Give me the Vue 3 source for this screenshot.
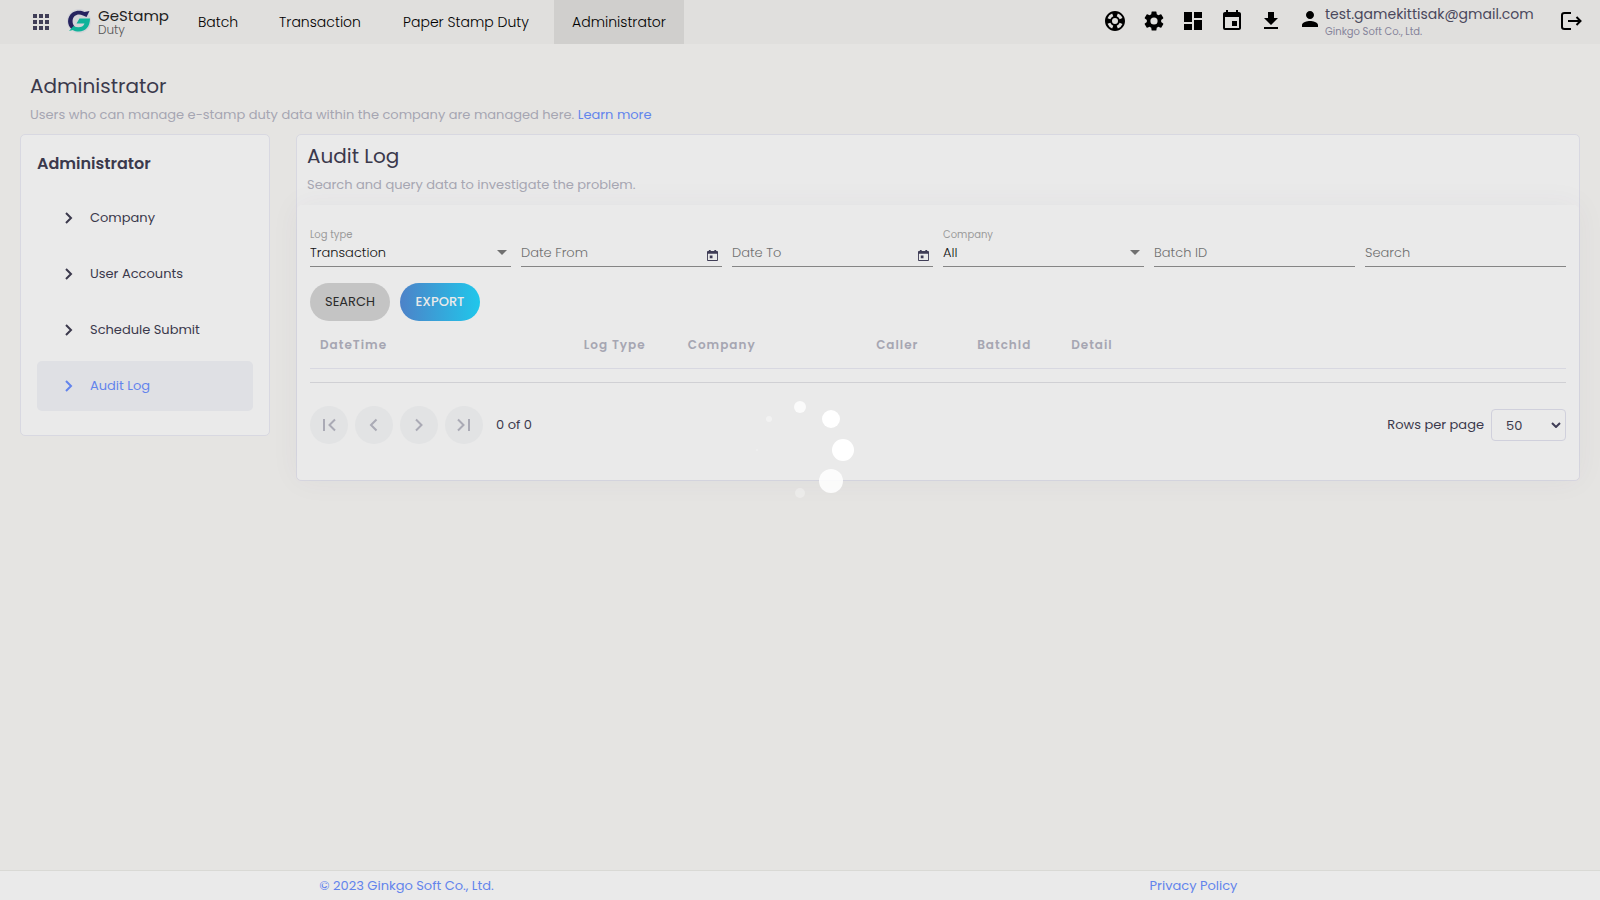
<script setup>
import { ref } from 'vue'

const navItems = [
  { name: 'Batch', key: 'batch' },
  { name: 'Transaction', key: 'transaction' },
  { name: 'Paper Stamp Duty', key: 'paper' },
  { name: 'Administrator', key: 'admin', active: true },
]

const tools = [
  {
    name: 'Support',
    path: 'M12 2C6.48 2 2 6.48 2 12s4.48 10 10 10 10-4.48 10-10S17.52 2 12 2zm7.46 7.12-2.78 1.15a4.98 4.98 0 0 0-2.95-2.94l1.15-2.78c2.1.8 3.77 2.47 4.58 4.57zM12 15a3 3 0 1 1 0-6 3 3 0 0 1 0 6zM9.13 4.54l1.17 2.78a5 5 0 0 0-2.98 2.97L4.54 9.13a7.98 7.98 0 0 1 4.59-4.59zM4.54 14.87l2.78-1.15a4.97 4.97 0 0 0 2.97 2.96l-1.17 2.78a7.99 7.99 0 0 1-4.58-4.59zm10.34 4.59-1.15-2.78a4.98 4.98 0 0 0 2.95-2.97l2.78 1.17a8 8 0 0 1-4.58 4.58z',
  },
  {
    name: 'Settings',
    path: 'M19.14 12.94c.04-.3.06-.61.06-.94s-.02-.64-.07-.94l2.03-1.58a.49.49 0 0 0 .12-.61l-1.92-3.32a.49.49 0 0 0-.59-.22l-2.39.96a7 7 0 0 0-1.62-.94l-.36-2.54a.48.48 0 0 0-.48-.41h-3.84a.47.47 0 0 0-.47.41l-.36 2.54c-.59.24-1.13.57-1.62.94l-2.39-.96a.48.48 0 0 0-.59.22L2.74 8.87a.47.47 0 0 0 .12.61l2.03 1.58c-.05.3-.09.63-.09.94s.02.64.07.94l-2.03 1.58a.49.49 0 0 0-.12.61l1.92 3.32c.12.22.37.29.59.22l2.39-.96c.5.38 1.03.7 1.62.94l.36 2.54c.05.24.24.41.48.41h3.84c.24 0 .44-.17.47-.41l.36-2.54a6.8 6.8 0 0 0 1.62-.94l2.39.96c.22.08.47 0 .59-.22l1.92-3.32a.47.47 0 0 0-.12-.61l-2.01-1.58zM12 15.6a3.6 3.6 0 1 1 0-7.2 3.6 3.6 0 0 1 0 7.2z',
  },
  { name: 'Dashboard', path: 'M3 13h8V3H3v10zm0 8h8v-6H3v6zm10 0h8V11h-8v10zm0-18v6h8V3h-8z' },
  {
    name: 'Calendar',
    path: 'M17 12h-5v5h5v-5zM16 1v2H8V1H6v2H5c-1.11 0-1.99.9-1.99 2L3 19a2 2 0 0 0 2 2h14c1.1 0 2-.9 2-2V5c0-1.1-.9-2-2-2h-1V1h-2zm3 18H5V8h14v11z',
  },
  { name: 'Download', path: 'M19 9h-4V3H9v6H5l7 7 7-7zM5 18v2h14v-2H5z' },
]

const sideItems = ['Company', 'User Accounts', 'Schedule Submit', 'Audit Log']
const columns = ['DateTime', 'Log Type', 'Company', 'Caller', 'BatchId', 'Detail']
const pagers = [
  { name: 'First page', path: 'M14 6v12M25 6.500L19.500 12l5.500 5.500' },
  { name: 'Previous page', path: 'M21.500 6.500L16 12l5.500 5.500' },
  { name: 'Next page', path: 'M16 6.500l5.500 5.500-5.500 5.500' },
  { name: 'Last page', path: 'M13 6.500l5.500 5.500-5.500 5.500M24 6v12' },
]

const logType = ref('Transaction')
const company = ref('All')
const dateFrom = ref('')
const dateTo = ref('')
const batchId = ref('')
const keyword = ref('')
const pageSize = ref('50')
</script>

<template>
  <div class="page">
    <header class="topbar">
      <button class="icon-btn apps" aria-label="Apps">
        <svg viewBox="0 0 24 24" width="24" height="24"><path fill="#3f3d56" d="M4 8h4V4H4zm6 12h4v-4h-4zm-6 0h4v-4H4zm0-6h4v-4H4zm6 0h4v-4h-4zm6-10v4h4V4zm-6 4h4V4h-4zm6 6h4v-4h-4zm0 6h4v-4h-4z" /></svg>
      </button>
      <a class="brand" href="#">
        <svg viewBox="0 0 24 24" width="24" height="24">
          <circle cx="12" cy="12" r="12" fill="#d3d4d8" />
          <path fill="#26235f" d="M17.500 3L22.500 2 19.500 8 16 6.500C11 4 6 6.500 5.600 11.500 5.400 14.500 6.300 16 7.700 17.500L4.500 20C-.5 15.500 0 7.500 5.600 3.500 9.500 1 14 1.200 17.500 3z" />
          <path fill="#0fb39a" d="M12.500 9.500H23C23 17.500 18.500 22.500 12 22.500 9.600 22.500 7.500 22 5.800 21L2 22 6.500 17C11 19.500 16 18.500 17.500 14.500H9.500z" />
        </svg>
        <span class="brand-text"><span class="brand-name">GeStamp</span><span class="brand-sub">Duty</span></span>
      </a>
      <nav class="nav">
        <a v-for="item in navItems" :key="item.key" href="#" :class="['nav-link', item.key, { active: item.active }]">{{ item.name }}</a>
      </nav>
      <div class="tools">
        <button v-for="tool in tools" :key="tool.name" class="icon-btn" :aria-label="tool.name">
          <svg viewBox="0 0 24 24" width="24" height="24"><path :d="tool.path" /></svg>
        </button>
      </div>
      <a class="user" href="#">
        <svg viewBox="0 0 24 24" width="24" height="24"><path d="M12 12c2.210 0 4-1.790 4-4s-1.790-4-4-4-4 1.790-4 4 1.790 4 4 4zm0 2c-2.670 0-8 1.340-8 4v2h16v-2c0-2.660-5.330-4-8-4z" /></svg>
        <span class="user-text"><span class="email">test.gamekittisak@gmail.com</span><span class="org">Ginkgo Soft Co., Ltd.</span></span>
      </a>
      <button class="icon-btn logout" aria-label="Log out">
        <svg viewBox="0 0 24 24" width="24" height="24" fill="none" stroke="#000" stroke-width="2"><path d="M12 4H5.500C4 4 3 4.500 3 6v12c0 1.500 1 2 2.500 2H12M9 12h12.500M17.500 8l4 4-4 4" /></svg>
      </button>
    </header>

    <main class="content">
      <div class="intro">
        <h1>Administrator</h1>
        <p>Users who can manage e-stamp duty data within the company are managed here. <a href="#">Learn more</a></p>
      </div>
      <div class="columns">
        <aside class="card sidebar">
          <h2>Administrator</h2>
          <a v-for="item in sideItems" :key="item" href="#" :class="['side-link', { active: item === 'Audit Log' }]">
            <svg viewBox="0 0 12 12" width="12" height="12" fill="none" stroke="currentColor" stroke-width="2"><path d="M3 1l5 5-5 5" /></svg>
            <span>{{ item }}</span>
          </a>
        </aside>

        <section class="card log">
          <div class="log-head">
            <h2>Audit Log</h2>
            <p>Search and query data to investigate the problem.</p>
          </div>
          <div class="log-body">
            <form class="filters" @submit.prevent>
              <div class="field">
                <label for="log-type">Log type</label>
                <select id="log-type" v-model="logType"><option>Transaction</option></select>
                <svg class="caret" viewBox="0 0 10 5" width="10" height="5"><path fill="#707070" d="M0 0h10L5 5z" /></svg>
              </div>
              <div class="field">
                <input v-model="dateFrom" type="text" placeholder="Date From" aria-label="Date From" />
                <button type="button" class="date-btn" aria-label="Pick start date">
                  <svg viewBox="0 0 12 12" width="11" height="11"><path fill="#3f3d56" fill-rule="evenodd" d="M2 0h2v1h4V0h2v1h1c.6 0 1 .4 1 1v9c0 .6-.4 1-1 1H1c-.6 0-1-.4-1-1V2c0-.6.4-1 1-1h1zM1 4v7h10V4zM3 6h3v3H3z" /></svg>
                </button>
              </div>
              <div class="field">
                <input v-model="dateTo" type="text" placeholder="Date To" aria-label="Date To" />
                <button type="button" class="date-btn" aria-label="Pick end date">
                  <svg viewBox="0 0 12 12" width="11" height="11"><path fill="#3f3d56" fill-rule="evenodd" d="M2 0h2v1h4V0h2v1h1c.6 0 1 .4 1 1v9c0 .6-.4 1-1 1H1c-.6 0-1-.4-1-1V2c0-.6.4-1 1-1h1zM1 4v7h10V4zM3 6h3v3H3z" /></svg>
                </button>
              </div>
              <div class="field">
                <label for="company">Company</label>
                <select id="company" v-model="company"><option>All</option></select>
                <svg class="caret" viewBox="0 0 10 5" width="10" height="5"><path fill="#707070" d="M0 0h10L5 5z" /></svg>
              </div>
              <div class="field"><input v-model="batchId" type="text" placeholder="Batch ID" aria-label="Batch ID" /></div>
              <div class="field"><input v-model="keyword" type="text" placeholder="Search" aria-label="Search" /></div>
            </form>
            <div class="actions">
              <button class="pill">SEARCH</button>
              <button class="pill primary">EXPORT</button>
            </div>
            <table>
              <colgroup>
                <col v-for="col in columns" :key="col" :class="'col-' + col.toLowerCase().replace(' ', '-')" />
              </colgroup>
              <thead>
                <tr><th v-for="col in columns" :key="col" scope="col">{{ col }}</th></tr>
              </thead>
            </table>
            <div class="pager">
              <button v-for="p in pagers" :key="p.name" class="page-btn" :aria-label="p.name" disabled>
                <svg viewBox="0 0 38 24" width="38" height="24" fill="none" stroke="currentColor" stroke-width="2"><path :d="p.path" /></svg>
              </button>
              <span class="count">0 of 0</span>
              <label class="rows-label" for="page-size">Rows per page</label>
              <div class="size">
                <select id="page-size" v-model="pageSize"><option>50</option></select>
                <svg viewBox="0 0 10 6" width="10" height="6" fill="none" stroke="#3f3d56" stroke-width="2"><path d="M1 1l4 4 4-4" /></svg>
              </div>
            </div>
          </div>
        </section>
      </div>
    </main>

    <footer class="footer">
      <a href="#">© 2023 Ginkgo Soft Co., Ltd.</a>
      <a href="#">Privacy Policy</a>
    </footer>

    <svg class="spinner" viewBox="0 0 120 120" width="120" height="120" fill="#fff" role="img" aria-label="Loading">
      <circle cx="60" cy="17" r="6" opacity=".8" />
      <circle cx="91" cy="29" r="9" />
      <circle cx="103" cy="60" r="11" />
      <circle cx="91" cy="91" r="12" opacity=".85" />
      <circle cx="60" cy="103" r="5" opacity=".3" />
      <circle cx="29" cy="29" r="3" opacity=".4" />
      <circle cx="17" cy="60" r="1" opacity=".3" />
    </svg>
  </div>
</template>

<style>
body {
  margin: 0;
  background: #e5e4e2;
}
</style>

<style scoped>
* {
  box-sizing: border-box;
}
.page {
  display: flex;
  flex-direction: column;
  min-height: 100vh;
  font-family: Poppins, Inter, sans-serif;
  font-size: 13px;
  color: #3b394c;
}
a {
  color: #6384ec;
  text-decoration: none;
}
h1,
h2,
p {
  margin: 0;
}
button,
input,
select {
  font: inherit;
  color: inherit;
  border: 0;
  padding: 0;
  background: none;
  outline: 0;
}
select {
  appearance: none;
}
svg {
  display: block;
  flex: none;
}

.topbar {
  display: flex;
  align-items: center;
  height: 44px;
  padding: 0 17px 0 29px;
  background: #e0dfdd;
}
.icon-btn {
  display: block;
}
.brand {
  display: flex;
  align-items: center;
  gap: 7px;
  width: 114px;
  margin-left: 14px;
}
.brand > svg {
  margin-bottom: 2px;
}
.brand-text {
  display: flex;
  flex-direction: column;
}
.brand-name {
  font-size: 15px;
  line-height: 15px;
  color: #222;
}
.brand-sub {
  font-size: 12px;
  line-height: 13px;
  font-weight: 300;
  color: #555;
}
.nav {
  display: flex;
  gap: 7px;
  align-self: stretch;
}
.nav-link {
  display: flex;
  align-items: center;
  justify-content: center;
  min-width: 74px;
  padding: 0 15px;
  font-size: 14px;
  font-weight: 300;
  color: #000;
  white-space: nowrap;
}
.nav-link.transaction {
  min-width: 116px;
}
.nav-link.paper {
  min-width: 162px;
}
.nav-link.admin {
  min-width: 130px;
}
.nav-link.active {
  background: #d0cfcd;
}
.tools {
  display: flex;
  gap: 15px;
  margin-left: auto;
  margin-bottom: 2px;
}
.user {
  display: flex;
  gap: 3px;
  margin-left: 15px;
  color: #3b394c;
}
.user > svg {
  margin-top: 3px;
}
.user-text {
  display: flex;
  flex-direction: column;
  min-width: 210px;
}
.email {
  font-size: 14px;
  line-height: 20px;
  color: #4a485c;
}
.org {
  font-size: 10px;
  line-height: 16px;
  color: #85839a;
}
.logout {
  margin-left: 24px;
  margin-bottom: 2px;
}

.content {
  flex: 1;
  padding: 30px 20px 20px;
}
.intro {
  padding: 0 10px;
}
h1,
.log h2 {
  font-size: 20px;
  font-weight: 400;
  line-height: 24px;
}
.intro p,
.log-head p {
  font-size: 13px;
  line-height: 20px;
  color: #a6a6b2;
}
.intro p {
  margin-top: 7px;
}
.columns {
  display: flex;
  align-items: flex-start;
  gap: 26px;
  margin-top: 9px;
}
.card {
  border: 1px solid #d8d8e1;
  border-radius: 5px;
  background: #eaeaea;
}
.sidebar {
  flex: 0 0 250px;
  padding: 16px 16px 24px;
}
.sidebar h2 {
  margin-bottom: 16px;
  font-size: 16px;
  font-weight: 600;
  line-height: 26px;
}
.side-link {
  display: flex;
  align-items: center;
  gap: 15px;
  height: 50px;
  padding-left: 26px;
  border-radius: 5px;
  color: #3b394c;
}
.side-link + .side-link {
  margin-top: 6px;
}
.side-link.active {
  background: #dfe0e4;
  color: #6384ec;
}
.log {
  flex: 1;
  min-width: 0;
}
.log-head {
  padding: 9px 10px 10px;
}
.log-head p {
  margin-top: 7px;
}
.log-body {
  padding: 22px 13px 36px;
  border-radius: 5px;
  background: #eaeaea;
  box-shadow: 0 0 30px rgba(82, 63, 105, 0.05);
}
.filters {
  display: grid;
  grid-template-columns: repeat(6, 1fr);
  gap: 10px;
}
.field {
  position: relative;
  display: flex;
  flex-direction: column;
  justify-content: flex-end;
  height: 40px;
  border-bottom: 1px solid #858585;
}
.field label {
  font-size: 10px;
  line-height: 13px;
  color: #9a9a9a;
}
.field input,
.field select {
  width: 100%;
  height: 25px;
  padding-bottom: 2px;
  font-weight: 300;
  font-size: 13px;
  color: #111;
}
.field input::placeholder {
  color: #707070;
  opacity: 1;
}
.caret {
  position: absolute;
  right: 4px;
  bottom: 11px;
  pointer-events: none;
}
.date-btn {
  position: absolute;
  right: 4px;
  bottom: 5px;
}
.actions {
  display: flex;
  gap: 10px;
  margin-top: 16px;
}
.pill {
  width: 80px;
  height: 38px;
  border-radius: 19px;
  background: #c4c4c4;
  font-size: 13px;
  color: #2b2b2b;
}
.pill.primary {
  background: linear-gradient(90deg, #4d82c8, #20c7eb);
  color: #eaeaea;
  font-weight: 500;
}
table {
  width: 100%;
  table-layout: fixed;
  border-collapse: collapse;
  border-bottom: 1px solid #d0d0d4;
}
table::after {
  content: '';
  display: table-row;
  height: 14px;
}
th {
  height: 47px;
  padding: 2px 10px 0;
  border-bottom: 1px solid #d8d8e1;
  font-size: 12px;
  font-weight: 600;
  letter-spacing: 1px;
  text-align: left;
  color: #a6a6b2;
}
.col-datetime {
  width: 21%;
}
.col-log-type {
  width: 104px;
}
.col-company {
  width: 15%;
}
.col-caller {
  width: 101px;
}
.col-batchid {
  width: 94px;
}
.pager {
  display: flex;
  align-items: center;
  gap: 7px;
  margin-top: 23px;
}
.page-btn {
  width: 38px;
  height: 38px;
  border-radius: 50%;
  background: #e2e3e4;
  color: #aaaab5;
}
.count {
  margin-left: 6px;
}
.rows-label {
  margin-left: auto;
}
.size {
  position: relative;
  width: 75px;
}
.size select {
  width: 100%;
  height: 32px;
  padding: 2px 0 0 14px;
  border: 1px solid #d0d0dc;
  border-radius: 4px;
}
.size svg {
  position: absolute;
  right: 5px;
  top: 13px;
  pointer-events: none;
}

.footer {
  display: grid;
  grid-template-columns: 1fr 1fr;
  align-items: center;
  justify-items: center;
  height: 30px;
  padding: 0 13px;
  border-top: 1px solid #d9d9d5;
  background: #eaeaea;
}
.spinner {
  position: fixed;
  inset: 0;
  margin: auto;
  pointer-events: none;
}
</style>
